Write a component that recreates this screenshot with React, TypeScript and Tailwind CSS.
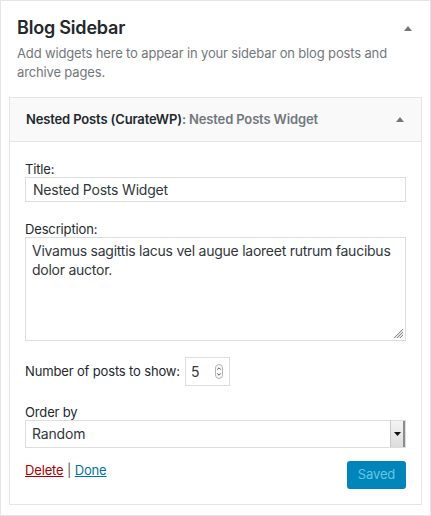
import React from "react";

const font = "font-['Inter','Liberation_Sans',sans-serif]";

const Caret = () => (
  <svg width="8" height="5" viewBox="0 0 8 5" className="shrink-0">
    <path d="M0 5 L4 0 L8 5 Z" fill="#72777c" />
  </svg>
);

const Spinner = () => (
  <svg width="8" height="15" viewBox="0 0 8 15">
    <rect x="0.5" y="0.5" width="7" height="14" rx="3.5" fill="#fafafa" stroke="#b4b4b4" />
    <path d="M2.2 5.6 L4 3.8 L5.8 5.6" fill="none" stroke="#555" strokeWidth="1" />
    <path d="M2.2 9.4 L4 11.2 L5.8 9.4" fill="none" stroke="#555" strokeWidth="1" />
  </svg>
);

const ResizeGrip = () => (
  <svg width="11" height="11" viewBox="0 0 11 11" className="absolute right-[2px] bottom-[2px]">
    <path d="M1 10 L10 1 M4 10 L10 4 M7 10 L10 7" stroke="#888" strokeWidth="1" />
    <path d="M2.5 10 L10 2.5 M5.5 10 L10 5.5" stroke="#ccc" strokeWidth="1" />
  </svg>
);

const App = () => {
  return (
    <div className={`w-[431px] h-[516px] bg-white border border-[#e5e5e5] px-[8px] pt-[15px] ${font} text-[#23282d] tracking-[-0.15px]`}>
      <div className="flex items-center justify-between pl-[8px] pr-[10px] h-[24px]">
        <h2 className="text-[18px] font-semibold leading-[24px] tracking-[-0.2px]">Blog Sidebar</h2>
        <Caret />
      </div>
      <p className="mt-[4px] pl-[8px] pr-[8px] text-[13px] leading-[19px] text-[#72777c]">
        Add widgets here to appear in your sidebar on blog posts and archive pages.
      </p>

      <div className="mt-[15px] border border-[#e5e5e5] bg-white">
        <div className="h-[44px] bg-[#f9f9f9] border-b border-[#e5e5e5] flex items-center justify-between pl-[16px] pr-[17px]">
          <h3 className="text-[13px] font-semibold">
            Nested Posts (CurateWP)<span className="text-[#72777c]">: Nested Posts Widget</span>
          </h3>
          <Caret />
        </div>

        <div className="px-[15px] pt-[19px] pb-[15px] text-[13px]">
          <label className="block leading-[16px]">Title:</label>
          <input
            readOnly
            value="Nested Posts Widget"
            className="block w-full h-[25px] border border-[#ddd] px-[7px] text-[14px] tracking-[-0.2px] text-[#32373c] outline-none"
          />

          <label className="block mt-[19px] leading-[16px]">Description:</label>
          <div className="relative">
            <textarea
              readOnly
              value="Vivamus sagittis lacus vel augue laoreet rutrum faucibus dolor auctor."
              className="block w-full h-[104px] border border-[#ddd] px-[6px] py-[3px] text-[14px] leading-[19px] tracking-[-0.25px] text-[#32373c] resize-none outline-none"
            />
            <ResizeGrip />
          </div>

          <div className="mt-[16px] flex items-center gap-[5px]">
            <span>Number of posts to show:</span>
            <div className="w-[45px] h-[29px] border border-[#ddd] flex items-center justify-between pl-[5px] pr-[6px]">
              <span className="text-[14px] text-[#32373c]">5</span>
              <Spinner />
            </div>
          </div>

          <label className="block mt-[18px] leading-[16px]">Order by</label>
          <div className="h-[28px] border border-[#ddd] flex items-stretch justify-between">
            <span className="pl-[6px] text-[14px] leading-[26px] text-[#32373c]">Random</span>
            <div className="w-[15px] bg-gradient-to-b from-[#f4f4f4] to-[#dcdcdc] border-l border-[#c8c8c8] border-r-2 border-r-[#8c8c8c] flex items-center justify-center">
              <svg width="7" height="4" viewBox="0 0 7 4">
                <path d="M0 0 L7 0 L3.5 4 Z" fill="#111" />
              </svg>
            </div>
          </div>

          <div className="mt-[13px] flex items-start justify-between">
            <div className="pt-[1px] leading-[16px]">
              <a className="text-[#a00] underline">Delete</a>
              <span className="text-[#555]"> | </span>
              <a className="text-[#0073aa] underline">Done</a>
            </div>
            <button className="w-[59px] h-[28px] rounded-[3px] bg-[#0085ba] text-[#66c6e4] text-[13px]">
              Saved
            </button>
          </div>
        </div>
      </div>
    </div>
  );
};

export default App;
